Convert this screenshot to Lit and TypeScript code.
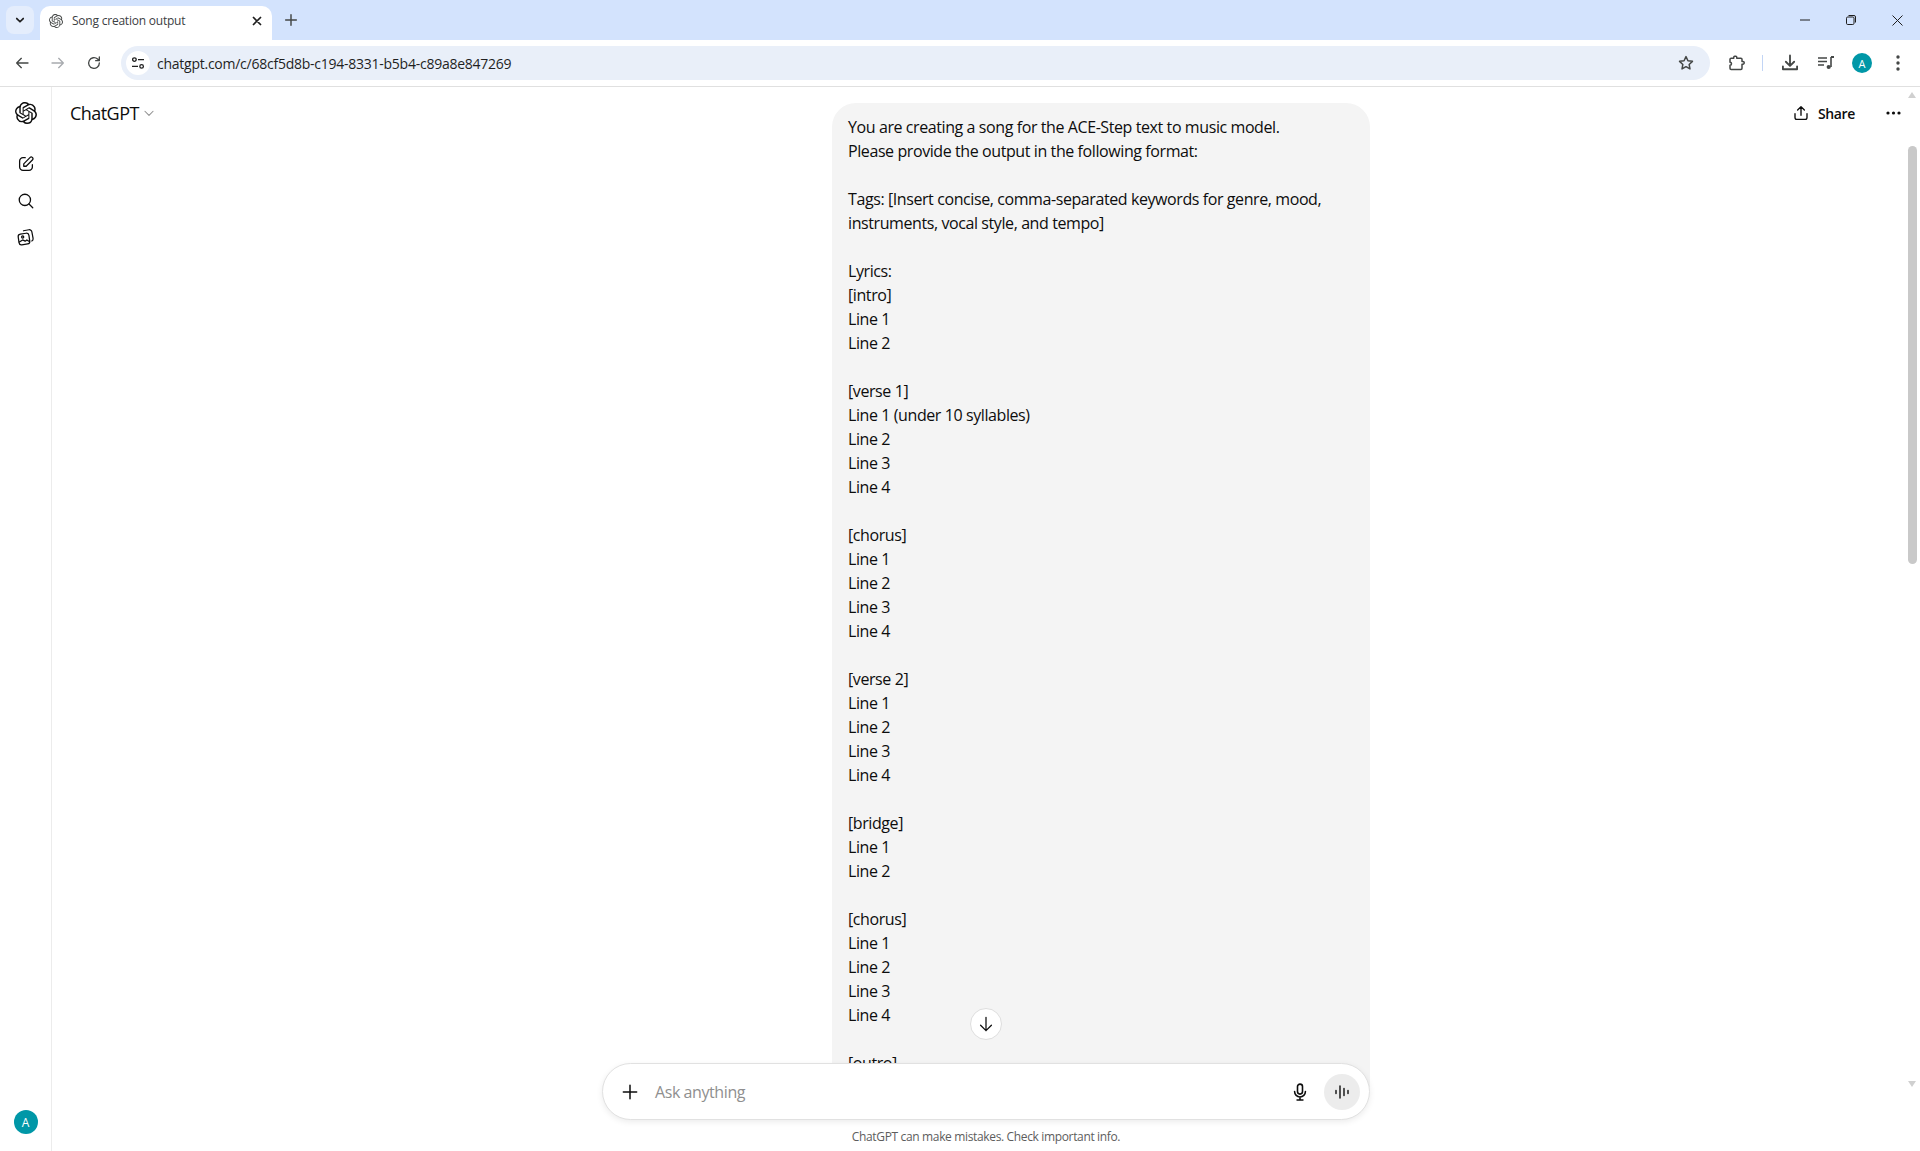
import { LitElement, html, css, svg } from "lit";
import { customElement } from "lit/decorators.js";

const OPENAI = "M22.2819 9.8211a5.9847 5.9847 0 0 0-.5157-4.9108 6.0462 6.0462 0 0 0-6.5098-2.9A6.0651 6.0651 0 0 0 4.9807 4.1818a5.9847 5.9847 0 0 0-3.9977 2.9 6.0462 6.0462 0 0 0 .7427 7.0966 5.98 5.98 0 0 0 .511 4.9107 6.051 6.051 0 0 0 6.5146 2.9001A5.9847 5.9847 0 0 0 13.2599 24a6.0557 6.0557 0 0 0 5.7718-4.2058 5.9894 5.9894 0 0 0 3.9977-2.9001 6.0557 6.0557 0 0 0-.7475-7.0729zm-9.022 12.6081a4.4755 4.4755 0 0 1-2.8764-1.0408l.1419-.0804 4.7783-2.7582a.7948.7948 0 0 0 .3927-.6813v-6.7369l2.02 1.1686a.071.071 0 0 1 .038.052v5.5826a4.504 4.504 0 0 1-4.4945 4.4944zm-9.6607-4.1254a4.4708 4.4708 0 0 1-.5346-3.0137l.142.0852 4.783 2.7582a.7712.7712 0 0 0 .7806 0l5.8428-3.3685v2.3324a.0804.0804 0 0 1-.0332.0615L9.74 19.9502a4.4992 4.4992 0 0 1-6.1408-1.6464zM2.3408 7.8956a4.485 4.485 0 0 1 2.3655-1.9728V11.6a.7664.7664 0 0 0 .3879.6765l5.8144 3.3543-2.0201 1.1685a.0757.0757 0 0 1-.071 0l-4.8303-2.7865A4.504 4.504 0 0 1 2.3408 7.872zm16.5963 3.8558L13.1038 8.364 15.1192 7.2a.0757.0757 0 0 1 .071 0l4.8303 2.7913a4.4944 4.4944 0 0 1-.6765 8.1042v-5.6772a.79.79 0 0 0-.407-.667zm2.0107-3.0231l-.142-.0852-4.7735-2.7818a.7759.7759 0 0 0-.7854 0L9.409 9.2297V6.8974a.0662.0662 0 0 1 .0284-.0615l4.8303-2.7866a4.4992 4.4992 0 0 1 6.6802 4.66zM8.3065 12.863l-2.02-1.1638a.0804.0804 0 0 1-.038-.0567V6.0742a4.4992 4.4992 0 0 1 7.3757-3.4537l-.142.0805L8.704 5.459a.7948.7948 0 0 0-.3927.6813zm1.0976-2.3654l2.602-1.4998 2.6069 1.4998v2.9994l-2.5974 1.4997-2.6067-1.4997Z";

const icon = (size: number, body: unknown, color = "currentColor", sw = 2) => html`<svg width=${size} height=${size} viewBox="0 0 24 24" fill="none" stroke=${color} stroke-width=${sw} stroke-linecap="round" stroke-linejoin="round">${body}</svg>`;

const logo = (size: number) => html`<svg width=${size} height=${size} viewBox="0 0 24 24" fill="currentColor"><path d=${OPENAI}></path></svg>`;

const TEXT = `You are creating a song for the ACE-Step text to music model.
Please provide the output in the following format:

Tags: [Insert concise, comma-separated keywords for genre, mood, instruments, vocal style, and tempo]

Lyrics:
[intro]
Line 1
Line 2

[verse 1]
Line 1 (under 10 syllables)
Line 2
Line 3
Line 4

[chorus]
Line 1
Line 2
Line 3
Line 4

[verse 2]
Line 1
Line 2
Line 3
Line 4

[bridge]
Line 1
Line 2

[chorus]
Line 1
Line 2
Line 3
Line 4

[outro]
Line 1
Line 2`;

@customElement("app-root")
export class AppRoot extends LitElement {
  static styles = css`
    :host { display: flex; flex-direction: column; width: 1920px; height: 1151px; overflow: hidden; background: #fff; font-family: "Open Sans", "Noto Sans", sans-serif; color: #0d0d0d; }
    .tabstrip { height: 40px; background: #d3e3fd; display: flex; align-items: flex-end; padding-left: 6px; flex: none; position: relative; }
    .tabsearch { width: 28px; height: 28px; border-radius: 8px; background: #e4edfc; margin-bottom: 6px; display: flex; align-items: center; justify-content: center; color: #1f1f1f; }
    .tab { position: relative; width: 232px; height: 34px; margin-left: 6px; background: #fff; border-radius: 10px 10px 0 0; display: flex; align-items: center; padding: 0 8px 4px 9px; box-sizing: border-box; color: #444746; }
    .tabtitle { font-size: 12px; line-height: 16px; margin: 0 0 1px 9px; flex: 1; white-space: nowrap; color: #3c4043; letter-spacing: -0.22px; font-family: "Open Sans", sans-serif; }
    .newtab { margin-left: 11px; margin-bottom: 12px; color: #444746; display: flex; }
    .winctl { margin-left: auto; display: flex; align-self: flex-start; color: #1f1f1f; }
    .winbtn { width: 46px; height: 40px; display: flex; align-items: center; justify-content: center; }
    .toolbar { height: 46px; background: #fff; border-radius: 8px 8px 0 0; margin-top: 0; box-sizing: border-box; display: flex; align-items: center; flex: none; color: #444746; padding-left: 10px; }
    .navbtn { width: 36px; display: flex; justify-content: center; }
    .navfirst { margin-left: -6px; }
    .dim { color: #a8abaf; }
    .omni { width: 1589px; height: 34px; margin-left: 9px; background: #e9eff9; border-radius: 17px; display: flex; align-items: center; box-sizing: border-box; padding: 0 15px 0 3px; }
    .siteinfo { width: 24px; height: 24px; border-radius: 50%; background: #fff; display: flex; align-items: center; justify-content: center; margin-right: 7px; color: #1f1f1f; margin-left: 2px; }
    .url { font-size: 14px; color: #1f1f1f; flex: 1; letter-spacing: -0.25px; }
    .tools { display: flex; align-items: center; }
    .tool { display: flex; justify-content: center; width: 36px; }
    .t-ext { margin-left: 8px; }
    .t-dl { margin-left: 9px; }
    .t-av { width: 34px; margin-left: 1px; }
    .t-dots { width: 38px; }
    .sep { width: 1px; height: 16px; background: #c2d5f5; margin: 0 0 0 8px; }
    .avatar { border-radius: 50%; background: #0097a7; color: #fff; display: flex; align-items: center; justify-content: center; font-family: "Open Sans", sans-serif; }
    .a20 { width: 20px; height: 20px; font-size: 11px; }
    .a24 { width: 24px; height: 24px; font-size: 12px; }
    .page { flex: 1; display: flex; border-top: 1px solid #e0e0e0; min-height: 0; position: relative; }
    .side { width: 52px; flex: none; box-sizing: border-box; border-right: 1px solid #ececec; display: flex; flex-direction: column; align-items: center; padding: 15px 0 17px; }
    .side .logo { margin-bottom: 22px; height: 22px; display: flex; }
    .side .item { height: 36.5px; display: flex; align-items: center; justify-content: center; color: #0d0d0d; }
    .side .bottom { margin-top: auto; }
    .main { flex: 1; position: relative; min-width: 0; overflow: hidden; display: flex; justify-content: center; }
    .header { position: absolute; top: 0; left: 0; right: 0; height: 52px; display: flex; align-items: center; padding: 0 19px 0 18px; box-sizing: border-box; }
    .title { font-size: 18px; color: #0d0d0d; letter-spacing: -0.55px; }
    .chev { margin-left: 3px; color: #8f8f8f; display: flex; }
    .share { margin-left: auto; display: flex; align-items: center; gap: 8px; font-size: 14px; font-weight: 600; letter-spacing: -0.35px; }
    .more { margin-left: 31px; display: flex; }
    .thread { width: 768px; display: flex; justify-content: flex-end; align-items: flex-start; padding-top: 16px; }
    .bubble { width: 538px; box-sizing: border-box; background: #f4f4f4; border-radius: 24px 24px 0 0; padding: 12px 16px; font-size: 16px; line-height: 24px; white-space: pre-wrap; color: #0d0d0d; letter-spacing: -0.41px; }
    .fade { position: absolute; left: 0; right: 0; top: 1000px; bottom: 0; background: #fff; }
    .down { position: absolute; top: 921px; left: 918px; width: 32px; height: 32px; border-radius: 50%; background: #fff; border: 1px solid #dedede; box-sizing: border-box; display: flex; align-items: center; justify-content: center; }
    .composer { position: absolute; left: 550px; top: 976px; width: 768px; height: 57px; box-sizing: border-box; background: #fff; border: 1px solid #e1e1e1; border-radius: 28.5px; box-shadow: 0 2px 6px rgba(0,0,0,.08); display: flex; align-items: center; padding: 0 9px 0 17px; }
    .placeholder { margin-left: 15px; font-size: 16px; color: #8f8f8f; flex: 1; letter-spacing: -0.42px; }
    .mic { margin-right: 14px; display: flex; }
    .voice { width: 36px; height: 36px; border-radius: 50%; background: #ececec; display: flex; align-items: center; justify-content: center; }
    .note { position: absolute; left: 550px; width: 768px; top: 1041px; text-align: center; font-size: 12px; line-height: 18px; color: #5d5d5d; letter-spacing: -0.35px; }
    .sb { position: absolute; right: 0; top: 0; bottom: 0; width: 17px; background: transparent; }
    .thumb { position: absolute; left: 5px; top: 59px; width: 9px; height: 418px; border-radius: 5px; background: #c9c9c9; }
    .arrow { position: absolute; left: 5px; width: 0; height: 0; border-left: 4.5px solid transparent; border-right: 4.5px solid transparent; }
    .up { top: 5px; border-bottom: 6px solid #d0d0d0; }
    .dn { bottom: 64px; border-top: 6px solid #d0d0d0; }
  `;

  render() {
    return html`
      <div class="tabstrip">
        <div class="tabsearch">${icon(14, svg`<path d="M6.5 9.5l5.5 5.5 5.5-5.5"/>`, "currentColor", 3)}</div>
        <div class="tab">${logo(14)}<span class="tabtitle">Song creation output</span>
          ${icon(14, svg`<path d="M6 6l12 12M18 6L6 18"/>`, "#1f1f1f", 3)}
        </div>
        <div class="newtab">${icon(16, svg`<path d="M12 4v16M4 12h16"/>`, "currentColor", 2.2)}</div>
        <div class="winctl">
          <div class="winbtn"><svg width="10" height="10" viewBox="0 0 10 10"><path d="M0 5h10" stroke="#1f1f1f" fill="none"/></svg></div>
          <div class="winbtn"><svg width="10" height="10" viewBox="0 0 10 10" fill="none" stroke="#1f1f1f"><rect x=".5" y="2" width="7.5" height="7.5" rx="1.2"/><path d="M2.5 .5h5.5a1.5 1.5 0 0 1 1.5 1.5v5.5"/></svg></div>
          <div class="winbtn"><svg width="11" height="11" viewBox="0 0 11 11"><path d="M.5 .5l10 10M10.5 .5l-10 10" stroke="#1f1f1f" fill="none"/></svg></div>
        </div>
      </div>
      <div class="toolbar">
        <div class="navbtn navfirst">${icon(16, svg`<path d="M21 12H4M11 5l-7 7 7 7"/>`)}</div>
        <div class="navbtn dim">${icon(16, svg`<path d="M3 12h17M13 5l7 7-7 7"/>`)}</div>
        <div class="navbtn">${icon(16, svg`<path d="M20 12a8 8 0 1 1-2.6-5.9L20 8.5M20 3v5.500h-5.500"/>`)}</div>
        <div class="omni">
          <div class="siteinfo"><svg width="14" height="14" viewBox="0 0 14 14" fill="none" stroke="currentColor" stroke-width="1.3"><circle cx="3.4" cy="3.6" r="1.8"/><path d="M7 3.6h6M1 10.4h6"/><circle cx="10.6" cy="10.4" r="1.8"/></svg></div>
          <span class="url">chatgpt.com/c/68cf5d8b-c194-8331-b5b4-c89a8e847269</span>
          ${icon(18, svg`<path d="M12 3.500l2.600 5.500 6 .8-4.400 4.100 1.100 6-5.300-3-5.300 3 1.100-6-4.400-4.100 6-.8z"/>`, "#444746", 2)}
        </div>
        <div class="tools">
          <div class="tool t-ext">${icon(18, svg`<path d="M9 5.500V4.200A1.200 1.200 0 0 1 10.200 3h1.600A1.200 1.200 0 0 1 13 4.200v1.300h5.500A1.500 1.500 0 0 1 20 7v3h1.200a1.800 1.800 0 0 1 0 3.600H20V19a1.500 1.500 0 0 1-1.500 1.500h-13A1.500 1.500 0 0 1 4 19v-4a2 2 0 0 0 0-4V7a1.500 1.500 0 0 1 1.500-1.500z"/>`)}</div>
          <div class="sep"></div>
          <div class="tool t-dl">${icon(20, svg`<path d="M12 3v12M7 10.500l5 5 5-5M3.500 16v3.500h17V16"/>`, "currentColor", 2.2)}</div>
          <div class="tool"><svg width="18" height="16" viewBox="0 0 18 16" fill="none" stroke="currentColor" stroke-width="1.5"><path d="M1 3h9M1 6.500h9M1 10h6"/><path d="M14 2v10" stroke-width="1.6"/><path d="M14 2h3" stroke-width="2"/><circle cx="11.700" cy="12" r="2.100" fill="currentColor" stroke="none"/></svg></div>
          <div class="tool t-av"><div class="avatar a20">A</div></div>
          <div class="tool t-dots"><svg width="4" height="16" viewBox="0 0 4 16" fill="currentColor"><circle cx="2" cy="2" r="1.700"/><circle cx="2" cy="8" r="1.700"/><circle cx="2" cy="14" r="1.700"/></svg></div>
        </div>
      </div>
      <div class="page">
        <aside class="side">
          <div class="logo">${logo(22)}</div>
          <div class="item">${icon(18, svg`<path d="M11 3.500H8a4.500 4.500 0 0 0-4.500 4.500v8A4.500 4.500 0 0 0 8 20.500h8a4.500 4.500 0 0 0 4.500-4.500v-3M9 15v-3.200L17.600 3.200a1.900 1.900 0 0 1 2.700 0l.5.5a1.900 1.900 0 0 1 0 2.700L12.200 15z"/>`, "currentColor", 1.7)}</div>
          <div class="item">${icon(18, svg`<circle cx="10.500" cy="10.500" r="7.500"/><path d="M16 16l5 5"/>`, "currentColor", 1.7)}</div>
          <div class="item">${icon(20, svg`<rect x="3" y="8" width="13" height="13" rx="3" transform="rotate(-8 9 14)"/><path d="M9 4.500l6.500-1.200a3 3 0 0 1 3.500 2.400l1.500 8a3 3 0 0 1-1.500 3.100"/><circle cx="8" cy="12" r="1.300"/><path d="M4 18l4-2.500 3 1.500 2-1.500 3 2"/>`, "currentColor", 1.5)}</div>
          <div class="bottom"><div class="avatar a24">A</div></div>
        </aside>
        <main class="main">
          <div class="thread"><div class="bubble">${TEXT}</div></div>
          <div class="fade"></div>
          <div class="header">
            <span class="title">ChatGPT</span>
            <span class="chev">${icon(14, svg`<path d="M5 9l7 7 7-7"/>`, "currentColor", 1.8)}</span>
            <span class="share">${icon(18, svg`<path d="M12 15V3.500M7.500 8L12 3.500 16.500 8M4 13v5a2.500 2.500 0 0 0 2.500 2.500h11a2.500 2.500 0 0 0 2.500-2.500v-5"/>`, "currentColor", 1.8)}Share</span>
            <span class="more"><svg width="15" height="4" viewBox="0 0 15 4" fill="currentColor"><circle cx="2" cy="2" r="1.600"/><circle cx="7.500" cy="2" r="1.600"/><circle cx="13" cy="2" r="1.600"/></svg></span>
          </div>
          <div class="down">${icon(20, svg`<path d="M12 4v16M5.500 13.500L12 20l6.500-6.500"/>`, "currentColor", 1.5)}</div>
          <div class="composer">
            ${icon(20, svg`<path d="M12 4v16M4 12h16"/>`, "currentColor", 1.800)}
            <span class="placeholder">Ask anything</span>
            <span class="mic">${icon(20, svg`<rect x="9" y="2.500" width="6" height="12" rx="3"/><path d="M5.500 11.500a6.500 6.500 0 0 0 13 0M12 18v3.500M8.500 21.500h7"/>`, "currentColor", 1.900)}</span>
            <span class="voice"><svg width="16" height="14" viewBox="0 0 16 14" fill="none" stroke="#0d0d0d" stroke-width="1.400" stroke-linecap="round"><path d="M2 5.500v3M6 1v12M10 3.500v7M14 5.500v3"/></svg></span>
          </div>
          <div class="note">ChatGPT can make mistakes. Check important info.</div>
        </main>
        <div class="sb"><div class="arrow up"></div><div class="thumb"></div><div class="arrow dn"></div></div>
      </div>
    `;
  }
}
